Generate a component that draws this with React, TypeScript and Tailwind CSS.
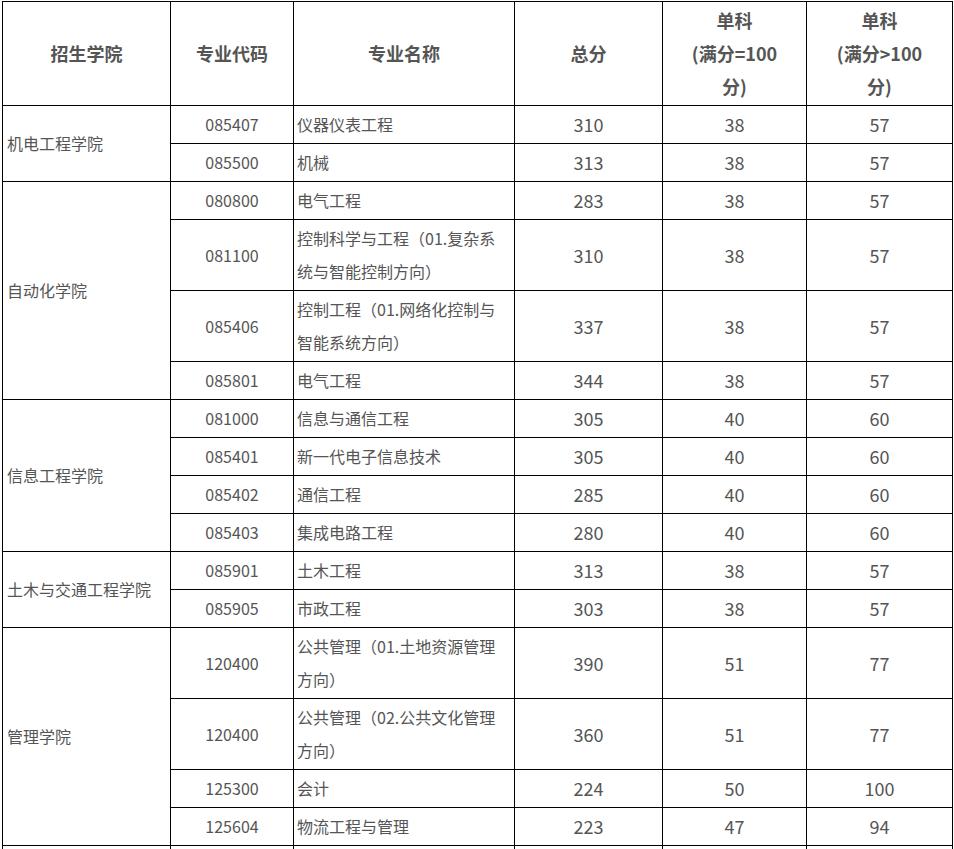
const rows: { college?: string; span?: number; code: string; name: string; total: string; a: string; b: string }[] = [
  { college: "机电工程学院", span: 2, code: "085407", name: "仪器仪表工程", total: "310", a: "38", b: "57" },
  { code: "085500", name: "机械", total: "313", a: "38", b: "57" },
  { college: "自动化学院", span: 4, code: "080800", name: "电气工程", total: "283", a: "38", b: "57" },
  { code: "081100", name: "控制科学与工程（01.复杂系统与智能控制方向）", total: "310", a: "38", b: "57" },
  { code: "085406", name: "控制工程（01.网络化控制与智能系统方向）", total: "337", a: "38", b: "57" },
  { code: "085801", name: "电气工程", total: "344", a: "38", b: "57" },
  { college: "信息工程学院", span: 4, code: "081000", name: "信息与通信工程", total: "305", a: "40", b: "60" },
  { code: "085401", name: "新一代电子信息技术", total: "305", a: "40", b: "60" },
  { code: "085402", name: "通信工程", total: "285", a: "40", b: "60" },
  { code: "085403", name: "集成电路工程", total: "280", a: "40", b: "60" },
  { college: "土木与交通工程学院", span: 2, code: "085901", name: "土木工程", total: "313", a: "38", b: "57" },
  { code: "085905", name: "市政工程", total: "303", a: "38", b: "57" },
  { college: "管理学院", span: 4, code: "120400", name: "公共管理（01.土地资源管理方向）", total: "390", a: "51", b: "77" },
  { code: "120400", name: "公共管理（02.公共文化管理方向）", total: "360", a: "51", b: "77" },
  { code: "125300", name: "会计", total: "224", a: "50", b: "100" },
  { code: "125604", name: "物流工程与管理", total: "223", a: "47", b: "94" },
];

const cell = "border border-black py-[2px] leading-[33px] align-middle";

export default function App() {
  return (
    <div
      className="w-[954px] h-[849px] overflow-hidden bg-white pl-[2px] pt-[1px] text-[#555]"
      style={{ fontFamily: '"Noto Sans CJK SC", "Noto Sans", sans-serif' }}
    >
      <table className="table-fixed border-collapse w-[950px]">
        <colgroup>
          <col className="w-[168px]" />
          <col className="w-[123px]" />
          <col className="w-[221px]" />
          <col className="w-[148px]" />
          <col className="w-[144px]" />
          <col className="w-[146px]" />
        </colgroup>
        <thead>
          <tr className="text-[18px] font-bold">
            <th className={`${cell} text-center`}>招生学院</th>
            <th className={`${cell} text-center`}>专业代码</th>
            <th className={`${cell} text-center`}>专业名称</th>
            <th className={`${cell} text-center`}>总分</th>
            <th className={`${cell} text-center`}>
              单科
              <br />
              (满分=100
              <br />
              分)
            </th>
            <th className={`${cell} text-center`}>
              单科
              <br />
              (满分&gt;100
              <br />
              分)
            </th>
          </tr>
        </thead>
        <tbody className="text-[16px]">
          {rows.map((r, i) => (
            <tr key={i}>
              {r.college && (
                <td rowSpan={r.span} className={`${cell} pl-[4px] text-left`}>
                  {r.college}
                </td>
              )}
              <td className={`${cell} text-center`}>{r.code}</td>
              <td className={`${cell} pl-[3px] pr-[8px] text-left`}>{r.name}</td>
              <td className={`${cell} text-center text-[18px]`}>{r.total}</td>
              <td className={`${cell} text-center text-[18px]`}>{r.a}</td>
              <td className={`${cell} text-center text-[18px]`}>{r.b}</td>
            </tr>
          ))}
          <tr>
            <td className={`${cell}`}>&nbsp;</td>
            <td className={`${cell}`}>&nbsp;</td>
            <td className={`${cell}`}>&nbsp;</td>
            <td className={`${cell}`}>&nbsp;</td>
            <td className={`${cell}`}>&nbsp;</td>
            <td className={`${cell}`}>&nbsp;</td>
          </tr>
        </tbody>
      </table>
    </div>
  );
}
